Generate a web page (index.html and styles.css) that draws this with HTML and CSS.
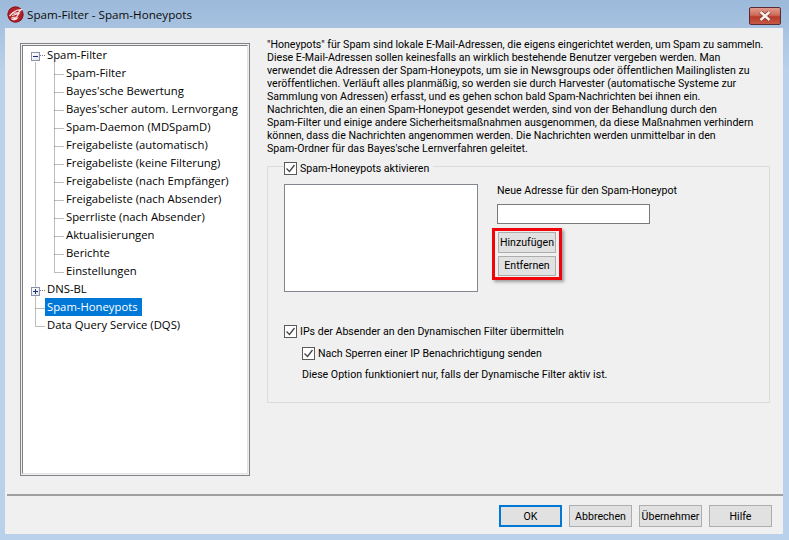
FILE: index.html
```html
<!DOCTYPE html>
<html lang="de">
<head>
<meta charset="utf-8">
<title>Spam-Filter - Spam-Honeypots</title>
<link rel="stylesheet" href="styles.css">
</head>
<body>
<div class="window">
  <header class="titlebar">
    <svg class="logo" width="17" height="17" viewBox="0 0 17 17"><circle cx="8.5" cy="8.5" r="8" fill="#b02026"/><circle cx="8.5" cy="8.5" r="7.6" fill="none" stroke="#7c1216" stroke-width=".8"/><path d="M2.5 10 L6 6.5 C8.5 4.5 11.5 3.5 14.5 3.5 L11.5 6.5 L6.5 7.5 M5 9.5 L12 7.5 L9.5 11 L4.5 11.5 M5 13 L10.5 12 C9 14 6.5 14.2 5 13 Z" fill="none" stroke="#f8e6e6" stroke-width="1.2"/></svg>
    <span class="title">Spam-Filter - Spam-Honeypots</span>
    <button class="close" aria-label="Schließen"><svg width="14" height="10" viewBox="0 0 14 10"><path d="M2.5 1 L11.5 9 M11.5 1 L2.5 9" stroke="#6b2a20" stroke-width="3.8"/><path d="M2.5 1 L11.5 9 M11.5 1 L2.5 9" stroke="#f6efe9" stroke-width="2.6"/></svg></button>
  </header>
  <div class="client">
    <div class="main">
      <nav class="tree">
        <svg class="guides" width="60" height="300" viewBox="0 0 60 300">
          <path d="M12.5 16.5V280.5H22 M12.5 262.5H22 M17 9.5H22 M31.5 16.5V226.5 M31.5 28.5H41 M31.5 46.5H41 M31.5 64.5H41 M31.5 82.5H41 M31.5 100.5H41 M31.5 118.5H41 M31.5 136.5H41 M31.5 154.5H41 M31.5 172.5H41 M31.5 190.5H41 M31.5 208.5H41 M31.5 226.5H41 M17 244.5H22" fill="none" stroke="#7a7a7a" stroke-dasharray="1 1"/>
        </svg>
        <div class="expander e1"><span class="minus"></span></div>
        <div class="expander e2"><span class="minus"></span><span class="vbar"></span></div>
        <ul class="tree-list">
          <li class="node">Spam-Filter</li>
          <li class="node sub">Spam-Filter</li>
          <li class="node sub">Bayes'sche Bewertung</li>
          <li class="node sub">Bayes'scher autom. Lernvorgang</li>
          <li class="node sub">Spam-Daemon (MDSpamD)</li>
          <li class="node sub">Freigabeliste (automatisch)</li>
          <li class="node sub">Freigabeliste (keine Filterung)</li>
          <li class="node sub">Freigabeliste (nach Empfänger)</li>
          <li class="node sub">Freigabeliste (nach Absender)</li>
          <li class="node sub">Sperrliste (nach Absender)</li>
          <li class="node sub">Aktualisierungen</li>
          <li class="node sub">Berichte</li>
          <li class="node sub">Einstellungen</li>
          <li class="node">DNS-BL</li>
          <li class="node"><span class="selected">Spam-Honeypots</span></li>
          <li class="node">Data Query Service (DQS)</li>
        </ul>
      </nav>
      <section class="page">
        <p class="intro">"Honeypots" für Spam sind lokale E-Mail-Adressen, die eigens eingerichtet werden, um Spam zu sammeln.<br>Diese E-Mail-Adressen sollen keinesfalls an wirklich bestehende Benutzer vergeben werden. Man<br>verwendet die Adressen der Spam-Honeypots, um sie in Newsgroups oder öffentlichen Mailinglisten zu<br>veröffentlichen. Verläuft alles planmäßig, so werden sie durch Harvester (automatische Systeme zur<br>Sammlung von Adressen) erfasst, und es gehen schon bald Spam-Nachrichten bei ihnen ein.<br>Nachrichten, die an einen Spam-Honeypot gesendet werden, sind von der Behandlung durch den<br>Spam-Filter und einige andere Sicherheitsmaßnahmen ausgenommen, da diese Maßnahmen verhindern<br>können, dass die Nachrichten angenommen werden. Die Nachrichten werden unmittelbar in den<br>Spam-Ordner für das Bayes'sche Lernverfahren geleitet.</p>
        <fieldset class="group">
          <legend class="legend"><span class="check"></span><span>Spam-Honeypots aktivieren</span></legend>
          <div class="top-row">
            <div class="listbox"></div>
            <div class="address">
              <div class="addr-label">Neue Adresse für den Spam-Honeypot</div>
              <div class="input"></div>
              <div class="highlight">
                <button class="btn small">Hinzufügen</button>
                <button class="btn small">Entfernen</button>
              </div>
            </div>
          </div>
          <div class="opt"><span class="check"></span><span>IPs der Absender an den Dynamischen Filter übermitteln</span></div>
          <div class="opt indented"><span class="check"></span><span>Nach Sperren einer IP Benachrichtigung senden</span></div>
          <div class="note">Diese Option funktioniert nur, falls der Dynamische Filter aktiv ist.</div>
        </fieldset>
      </section>
    </div>
    <footer class="footer">
      <button class="btn default">OK</button>
      <button class="btn">Abbrechen</button>
      <button class="btn">Übernehmer</button>
      <button class="btn">Hilfe</button>
    </footer>
  </div>
</div>
</body>
</html>
```
FILE: styles.css
```css
* { box-sizing: border-box; }
html, body { margin: 0; height: 100%; }
body { width: 789px; height: 540px; overflow: hidden; font-family: Roboto, "Liberation Sans", sans-serif; font-size: 10.6px; color: #000; }
.window { width: 789px; height: 540px; display: flex; flex-direction: column; padding: 0 6px 6px 5px; background: linear-gradient(180deg, #9cb9da 0, #b9d1ea 70px, #b9d1ea 100%); }
.titlebar { height: 28px; flex: none; display: flex; align-items: center; position: relative; padding: 0 0 0 2px; }
.logo { flex: none; }
.title { margin-left: 3px; font-family: "Open Sans", sans-serif; font-size: 11.65px; color: #0b0b0b; }
.close { position: absolute; right: 2px; top: 7px; width: 32px; height: 18px; padding: 0; border: 1px solid #5a2b33; border-radius: 2px; background: linear-gradient(180deg, #e29a8c 0, #cf6a58 45%, #b8392a 55%, #c65a44 100%); display: flex; align-items: center; justify-content: center; }
.client { flex: 1; background: #f0f0f0; display: flex; flex-direction: column; min-height: 0; }
.main { height: 468px; flex: none; display: flex; padding: 15px 13px 0 13px; border-bottom: 2px solid #a0a0a0; margin-left: 2px; }
.tree { position: relative; width: 230px; height: 433px; flex: none; background: #fff; border: 1px solid #82828a; box-shadow: inset 0 0 0 1px #f0f0f0; padding: 2px; }
.tree::before { content: ""; position: absolute; inset: 1px; border: 1px solid; border-color: #7f7f7f #e3e3e3 #e3e3e3 #7f7f7f; pointer-events: none; }
.guides { position: absolute; left: 2px; top: 2px; }
.expander { position: absolute; left: 10px; width: 9px; height: 9px; border: 1px solid #8b91a8; background: linear-gradient(135deg, #fff, #dfe3ee); display: flex; align-items: center; justify-content: center; }
.e1 { top: 8px; }
.e2 { top: 243px; }
.minus { display: block; width: 5px; height: 1px; background: #1c2f7c; }
.vbar { position: absolute; left: 3px; top: 1px; width: 1px; height: 5px; background: #1c2f7c; }
.tree-list { position: relative; list-style: none; margin: 0; padding: 0 0 0 24px; }
.node { height: 18px; line-height: 18px; font-family: "Open Sans", sans-serif; font-size: 11.3px; white-space: nowrap; }
.sub { padding-left: 19px; }
.selected { display: inline-block; margin-left: -2px; padding: 0 4px 0 2px; height: 18px; background: #0078d7; color: #fff; }
.page { flex: 1; margin-left: 17px; margin-top: -5px; min-width: 0; }
.intro { margin: 0; line-height: 13px; white-space: nowrap; }
.group { margin: 1px 0 0; padding: 0 0 0 16px; height: 247px; width: 503px; border: 1px solid #dcdcdc; min-inline-size: 0; }
.legend { display: flex; align-items: center; gap: 3px; padding: 4px 4px 0 0; height: 20px; }
.check { display: inline-block; flex: none; width: 13px; height: 13px; border: 1px solid #5a5a5a; background: #fff no-repeat center/11px 11px url("data:image/svg+xml,%3Csvg xmlns='http://www.w3.org/2000/svg' viewBox='0 0 11 11'%3E%3Cpath d='M1.5 5.5 L4.5 8.5 L9.5 2' fill='none' stroke='%23444' stroke-width='1.3'/%3E%3C/svg%3E"); }
.top-row { display: flex; margin-top: 8px; height: 108px; }
.listbox { width: 194px; height: 108px; background: #fff; border: 1px solid #82878f; flex: none; }
.address { margin-left: 19px; position: relative; }
.addr-label { height: 20px; line-height: 13px; white-space: nowrap; }
.input { width: 153px; height: 20px; background: #fff; border: 1px solid #7a7a7a; }
.highlight { position: absolute; left: -5px; top: 44px; width: 70px; height: 52px; border: 3px solid #f0060a; box-shadow: 2px 2px 3px rgba(0,0,0,.35); display: flex; flex-direction: column; align-items: center; gap: 3px; padding-top: 1px; }
.btn { width: 63px; height: 22px; padding: 0; background: #e1e1e1; border: 1px solid #adadad; font-family: Roboto, "Liberation Sans", sans-serif; font-size: 10.6px; color: #000; white-space: nowrap; overflow: hidden; }
.btn.small { width: 58px; height: 20.5px; }
.opt { display: flex; align-items: center; gap: 3px; height: 14px; white-space: nowrap; }
.top-row + .opt { margin-top: 32px; }
.indented { margin-left: 18px; margin-top: 8px; }
.note { margin: 8px 0 0 18px; line-height: 14px; white-space: nowrap; }
.footer { flex: 1; display: flex; justify-content: flex-end; align-items: flex-start; gap: 7px; padding: 9px 11px 0 0; }
.footer .btn.default { border: 2px solid #0078d7; }
```
